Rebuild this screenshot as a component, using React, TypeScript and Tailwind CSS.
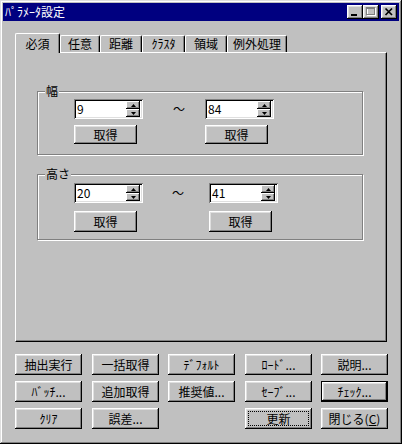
import React from "react";

const raised =
  "shadow-[inset_-1px_-1px_#000,inset_1px_1px_#fff,inset_-2px_-2px_#808080,inset_2px_2px_#dfdfdf]";

function Btn({
  children,
  cls = "",
  def = false,
  focus = false,
}: {
  children: React.ReactNode;
  cls?: string;
  def?: boolean;
  focus?: boolean;
}) {
  return (
    <div
      className={`relative flex items-center justify-center bg-[#c0c0c0] leading-none ${
        def ? "border border-black" : ""
      } ${raised} ${cls}`}
    >
      {focus && <div className="absolute inset-[3px] border border-dotted border-black" />}
      <span className="relative">{children}</span>
    </div>
  );
}

function SpinBtn({ up }: { up: boolean }) {
  return (
    <div
      className={`flex-1 flex items-center justify-center bg-[#c0c0c0] shadow-[inset_-1px_-1px_#000,inset_1px_1px_#fff,inset_-2px_-2px_#808080]`}
    >
      <svg width="5" height="3" viewBox="0 0 5 3">
        {up ? <polygon points="0,3 5,3 2.5,0" fill="#000" /> : <polygon points="0,0 5,0 2.5,3" fill="#000" />}
      </svg>
    </div>
  );
}

function Spin({ value, cls = "" }: { value: string; cls?: string }) {
  return (
    <div
      className={`flex w-[69px] bg-white p-[2px] shadow-[inset_1px_1px_#808080,inset_-1px_-1px_#fff,inset_2px_2px_#000,inset_-2px_-2px_#dfdfdf] ${cls}`}
    >
      <div className="flex-1 flex items-center pl-[1px] leading-none text-[12px]">{value}</div>
      <div className="flex flex-col w-[14px] mr-[1px]">
        <SpinBtn up />
        <SpinBtn up={false} />
      </div>
    </div>
  );
}

const tabs = [
  { label: "必須", w: "w-[45px]", sel: true },
  { label: "任意", w: "w-[40px]", sel: false },
  { label: "距離", w: "w-[42px]", sel: false },
  { label: "ｸﾗｽﾀ", w: "w-[43px]", sel: false },
  { label: "領域", w: "w-[42px]", sel: false },
  { label: "例外処理", w: "w-[60px]", sel: false },
];

const buttons: { label: React.ReactNode; def?: boolean; focus?: boolean; empty?: boolean }[] = [
  { label: "抽出実行" },
  { label: "一括取得" },
  { label: "ﾃﾞﾌｫﾙﾄ" },
  { label: "ﾛｰﾄﾞ..." },
  { label: "説明..." },
  { label: "ﾊﾞｯﾁ..." },
  { label: "追加取得" },
  { label: "推奨値..." },
  { label: "ｾｰﾌﾞ..." },
  { label: "ﾁｪｯｸ...", def: true },
  { label: "ｸﾘｱ" },
  { label: "誤差..." },
  { label: "", empty: true },
  { label: "更新", focus: true },
  {
    label: (
      <>
        閉じる(<span className="underline underline-offset-1">C</span>)
      </>
    ),
  },
];

export default function App() {
  return (
    <div className="w-[402px] h-[444px] bg-[#c0c0c0] p-[3px] flex flex-col font-['Noto_Sans_CJK_JP',sans-serif] text-[12px] text-black shadow-[inset_-1px_-1px_#000,inset_1px_1px_#dfdfdf,inset_-2px_-2px_#808080,inset_2px_2px_#fff]">
      {/* Title bar */}
      <div className="h-[18px] bg-[#000080] flex items-center justify-between pl-[2px] pr-[2px]">
        <span className="text-white leading-none text-[12px]">ﾊﾟﾗﾒｰﾀ設定</span>
        <div className="flex items-center">
          <div className={`w-[16px] h-[14px] bg-[#c0c0c0] ${raised}`}>
            <svg width="16" height="14" viewBox="0 0 16 14" className="block">
              <rect x="4" y="9" width="6" height="2" fill="#000" />
            </svg>
          </div>
          <div className={`w-[16px] h-[14px] bg-[#c0c0c0] ${raised}`}>
            <svg width="16" height="14" viewBox="0 0 16 14" className="block">
              <rect x="4.5" y="3.5" width="8" height="7" fill="none" stroke="#fff" />
              <rect x="3.5" y="2.5" width="8" height="7" fill="none" stroke="#808080" />
              <rect x="3" y="3" width="9" height="1" fill="#808080" />
            </svg>
          </div>
          <div className={`ml-[2px] w-[16px] h-[14px] bg-[#c0c0c0] ${raised}`}>
            <svg width="16" height="14" viewBox="0 0 16 14" className="block">
              <path d="M4.5 3.5 L11 10 M11 3.5 L4.5 10" stroke="#000" strokeWidth="1.7" />
            </svg>
          </div>
        </div>
      </div>

      {/* Tabs */}
      <div className="relative z-10 mt-[12px] ml-[12px] h-[20px] -mb-[1px] flex items-end">
        {tabs.map((t) =>
          t.sel ? (
            <div
              key={t.label}
              className={`${t.w} h-[20px] bg-[#c0c0c0] flex items-start justify-center pt-[3px] border-t border-l border-white border-r border-r-black rounded-tl-[2px] rounded-tr-[2px] shadow-[inset_-1px_0_#808080] leading-[14px]`}
            >
              {t.label}
            </div>
          ) : (
            <div
              key={t.label}
              className={`${t.w} h-[17px] mb-[1px] bg-[#c0c0c0] flex items-start justify-center pt-[1px] border-t border-l border-white border-r border-r-black rounded-tl-[2px] rounded-tr-[2px] shadow-[inset_-1px_0_#808080] leading-[14px]`}
            >
              {t.label}
            </div>
          )
        )}
      </div>

      {/* Panel */}
      <div className="ml-[12px] w-[372px] h-[290px] border-t border-l border-white border-r border-b border-r-black border-b-black shadow-[inset_-1px_-1px_#808080] pl-[21px] pt-[38px] flex flex-col">
        {/* Group 幅 */}
        <div className="relative w-[326px] h-[64px] border border-[#808080] shadow-[inset_1px_1px_#fff,1px_1px_#fff] pl-[36px] pt-[7px] flex flex-col">
          <span className="absolute left-[7px] -top-[8px] px-[1px] bg-[#c0c0c0] leading-[14px]">幅</span>
          <div className="flex items-center h-[20px]">
            <Spin value="9" cls="h-[20px]" />
            <div className="w-[62px] pl-[30px] leading-none">～</div>
            <Spin value="84" cls="h-[20px]" />
          </div>
          <div className="flex mt-[6px]">
            <Btn cls="w-[63px] h-[19px]">取得</Btn>
            <Btn cls="ml-[68px] w-[63px] h-[19px]">取得</Btn>
          </div>
        </div>

        {/* Group 高さ */}
        <div className="relative mt-[19px] w-[326px] h-[66px] border border-[#808080] shadow-[inset_1px_1px_#fff,1px_1px_#fff] pl-[36px] pt-[8px] flex flex-col">
          <span className="absolute left-[7px] -top-[8px] px-[1px] bg-[#c0c0c0] leading-[14px]">高さ</span>
          <div className="flex items-center h-[20px]">
            <Spin value="20" cls="h-[20px]" />
            <div className="w-[66px] pl-[29px] leading-none">～</div>
            <Spin value="41" cls="h-[20px]" />
          </div>
          <div className="flex mt-[8px]">
            <Btn cls="w-[63px] h-[21px]">取得</Btn>
            <Btn cls="ml-[72px] w-[63px] h-[21px]">取得</Btn>
          </div>
        </div>
      </div>

      {/* Bottom buttons */}
      <div className="mt-[12px] ml-[12px] grid grid-cols-[77px_76px_77px_76px_67px] gap-y-[6px]">
        {buttons.map((b, i) =>
          b.empty ? (
            <div key={i} />
          ) : (
            <Btn key={i} cls="w-[67px] h-[21px]" def={b.def} focus={b.focus}>
              {b.label}
            </Btn>
          )
        )}
      </div>
    </div>
  );
}
